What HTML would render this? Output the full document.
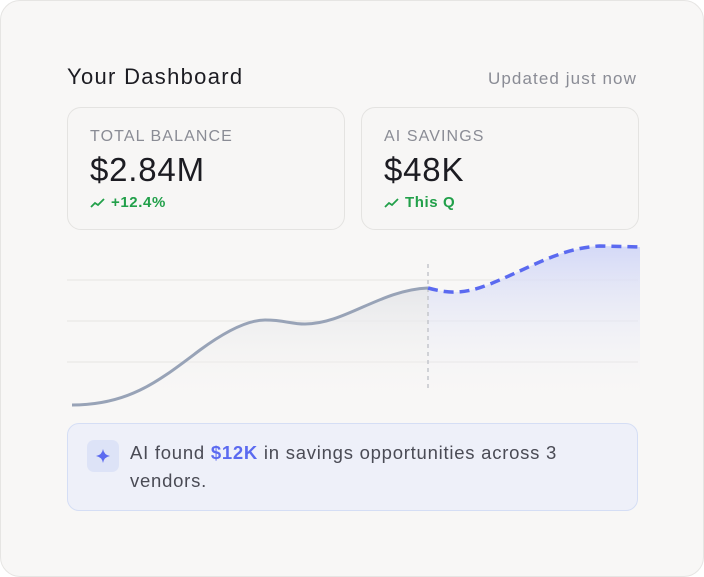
<!DOCTYPE html><html><head><style>
body{margin:0;width:704px;height:577px;background:#fff;font-family:"Liberation Sans",sans-serif;}
.outer{position:absolute;left:0;top:0;width:702px;height:575px;border:1px solid #e6e5e3;border-radius:20px;background:#f8f7f6;}
.t{position:absolute;white-space:nowrap}
.card{position:absolute;top:107px;width:276px;height:121px;border:1.5px solid #e4e3e1;border-radius:14px;background:#f7f6f5}
.lbl{position:absolute;left:22px;top:20px;font-size:16px;letter-spacing:1.1px;color:#8a8c95}
.val{position:absolute;left:22px;top:43px;font-size:33px;letter-spacing:0.8px;color:#1c1c22}
.chg{position:absolute;left:22px;top:86px;font-size:15px;font-weight:bold;letter-spacing:0.6px;color:#22a04a}
.chg svg{vertical-align:-1px;margin-right:6px}
</style></head><body><div class="outer"></div>
<div class="t" style="left:67px;top:64px;font-size:22px;letter-spacing:1.3px;color:#1c1c22">Your Dashboard</div>
<div class="t" style="left:488px;top:69px;font-size:17px;letter-spacing:1.1px;color:#8a8c95">Updated just now</div>
<div class="card" style="left:67px"><div class="lbl t">TOTAL BALANCE</div><div class="val t">$2.84M</div><div class="chg t"><svg width="15" height="10" viewBox="0 0 15 10"><path d="M1 9 L5 5 L8 7 L14 1" fill="none" stroke="#22a04a" stroke-width="1.8"/></svg>+12.4%</div></div>
<div class="card" style="left:361px"><div class="lbl t">AI SAVINGS</div><div class="val t">$48K</div><div class="chg t"><svg width="15" height="10" viewBox="0 0 15 10"><path d="M1 9 L5 5 L8 7 L14 1" fill="none" stroke="#22a04a" stroke-width="1.8"/></svg>This Q</div></div>
<svg style="position:absolute;left:0;top:0" width="704" height="577">
<defs><linearGradient id="g1" x1="0" y1="0" x2="0" y2="1"><stop offset="0" stop-color="#e6e7ea"/><stop offset="1" stop-color="#f8f7f6" stop-opacity="0"/></linearGradient>
<linearGradient id="g2" x1="0" y1="0" x2="0" y2="1"><stop offset="0" stop-color="#d4d9f7"/><stop offset="1" stop-color="#f8f7f6" stop-opacity="0"/></linearGradient></defs>
<g stroke="#e6e5e3" stroke-width="1"><line x1="67" y1="280" x2="638" y2="280"/><line x1="67" y1="321" x2="638" y2="321"/><line x1="67" y1="362" x2="638" y2="362"/></g>
<path d="M72 405 C130 405 160 380 200 350 C230 328 250 320 265 320 C285 320 290 324 305 324 C345 324 380 290 428 288 L428 405 Z" fill="url(#g1)"/>
<path d="M428 288 C450 294 465 294 490 284 C530 268 560 248 600 246 L640 247 L640 405 L428 405 Z" fill="url(#g2)"/>
<line x1="428" y1="264" x2="428" y2="388" stroke="#c4c6cc" stroke-width="1.5" stroke-dasharray="4 4"/>
<path d="M72 405 C130 405 160 380 200 350 C230 328 250 320 265 320 C285 320 290 324 305 324 C345 324 380 290 428 288" fill="none" stroke="#98a3b7" stroke-width="3"/>
<path d="M428 288 C450 294 465 294 490 284 C530 268 560 248 600 246 L640 247" fill="none" stroke="#5b6af0" stroke-width="3.5" stroke-dasharray="10 6"/>
</svg>
<div style="position:absolute;left:67px;top:423px;width:569px;height:86px;border:1.5px solid #d5def5;border-radius:12px;background:#eef0f9"></div>
<div style="position:absolute;left:87px;top:440px;width:32px;height:32px;border-radius:7px;background:#dde3f7"><svg width="32" height="32" viewBox="0 0 32 32"><path d="M16 9 Q17 15 23 16 Q17 17 16 23 Q15 17 9 16 Q15 15 16 9Z" fill="#5b6af0"/></svg></div>
<div class="t" style="left:130px;top:439px;font-size:18.5px;letter-spacing:0.75px;line-height:28px;color:#4a4b55">AI found <b style="color:#5b6af0">$12K</b> in savings opportunities across 3<br>vendors.</div>
</body></html>
